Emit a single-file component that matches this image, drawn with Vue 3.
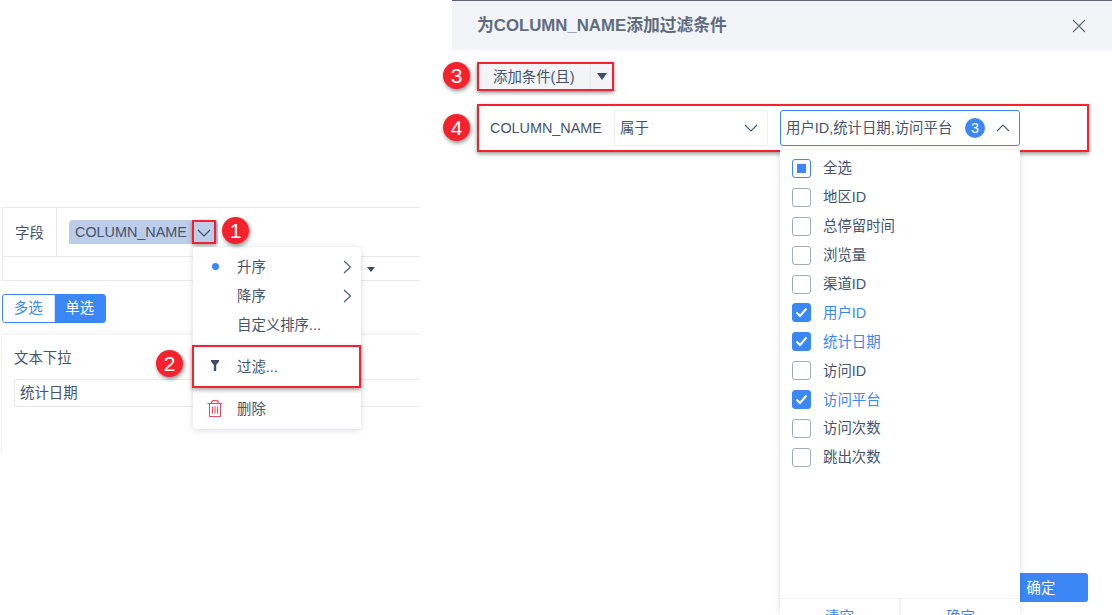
<script setup>
const sortItems = [
  { label: '升序', dot: true, arrow: true },
  { label: '降序', arrow: true },
  { label: '自定义排序...' },
]
const options = [
  { label: '全选', state: 'partial' },
  { label: '地区ID' },
  { label: '总停留时间' },
  { label: '浏览量' },
  { label: '渠道ID' },
  { label: '用户ID', state: 'on' },
  { label: '统计日期', state: 'on' },
  { label: '访问ID' },
  { label: '访问平台', state: 'on' },
  { label: '访问次数' },
  { label: '跳出次数' },
]
</script>

<template>
  <div class="page">
    <section class="left">
      <div class="field-table">
        <div class="field-row">
          <div class="field-label">字段</div>
          <div class="field-value">
            <div class="pill">
              <span>COLUMN_NAME</span>
              <span class="pill-arrow">
                <svg width="14" height="8" viewBox="0 0 14 8"><path d="M1 1l6 6 6-6" fill="none" stroke="#3d4d66" stroke-width="1.1"/></svg>
                <i class="mark-box"></i>
              </span>
              <b class="badge badge-1">1</b>
            </div>
          </div>
        </div>
        <div class="field-sub"><i class="caret"></i></div>
      </div>

      <div class="segment">
        <span class="seg seg-off">多选</span>
        <span class="seg seg-on">单选</span>
      </div>

      <div class="card">
        <div class="card-title">文本下拉</div>
        <div class="card-input">统计日期</div>
      </div>

      <div class="menu">
        <div class="menu-top">
          <div v-for="item in sortItems" :key="item.label" class="menu-item">
            <span class="menu-icon"><i v-if="item.dot" class="dot"></i></span>
            <span class="menu-text">{{ item.label }}</span>
            <svg v-if="item.arrow" class="menu-arrow" width="9" height="14" viewBox="0 0 9 14"><path d="M1 1l6.5 6L1 13" fill="none" stroke="#4a5a73" stroke-width="1.1"/></svg>
          </div>
        </div>
        <div class="menu-item menu-filter">
          <span class="menu-icon">
            <svg width="8" height="11" viewBox="0 0 8 11"><path d="M0 0h8v1.5L5.2 5v6H2.8V5L0 1.5z" fill="#3d4d66"/></svg>
          </span>
          <span class="menu-text">过滤...</span>
          <i class="mark-box"></i>
          <b class="badge badge-2">2</b>
        </div>
        <div class="menu-item menu-delete">
          <span class="menu-icon">
            <svg width="16" height="17" viewBox="0 0 16 17" fill="none" stroke="#ea4f60" stroke-width="1.1"><path d="M0.5 3.5h15M4.5 3.5C4.5 1.5 5.5 .6 6.5 .6h3c1 0 2 .9 2 2.9M2.5 3.5v13h11v-13M5.5 6.5v7M8 6.5v7M10.5 6.5v7"/></svg>
          </span>
          <span class="menu-text">删除</span>
        </div>
      </div>
    </section>

    <section class="dialog">
      <header class="dialog-head">
        <h2>为COLUMN_NAME添加过滤条件</h2>
        <svg width="14" height="14" viewBox="0 0 14 14"><path d="M1 1l12 12M13 1L1 13" stroke="#5f6b7e" stroke-width="1.1" fill="none"/></svg>
      </header>

      <div class="dialog-body">
        <div class="add-btn">
          <span class="add-main">添加条件(且)</span>
          <span class="add-more"><i class="caret caret-lg"></i></span>
          <i class="mark-box"></i>
          <b class="badge badge-3">3</b>
        </div>

        <div class="condition">
          <span class="cond-name">COLUMN_NAME</span>
          <div class="select">
            <span>属于</span>
            <svg width="14" height="8" viewBox="0 0 14 8"><path d="M1 1l6 6 6-6" fill="none" stroke="#4a5a73" stroke-width="1.1"/></svg>
          </div>
          <div class="multi">
            <span class="multi-text">用户ID,统计日期,访问平台</span>
            <span class="count">3</span>
            <svg width="14" height="8" viewBox="0 0 14 8"><path d="M1 7l6-6 6 6" fill="none" stroke="#4a5a73" stroke-width="1.1"/></svg>
            <div class="dropdown">
              <div class="opt-list">
                <div v-for="o in options" :key="o.label" class="opt" :class="{ 'opt-on': o.state === 'on' }">
                  <span class="check" :class="o.state">
                    <svg v-if="o.state === 'on'" width="13" height="11" viewBox="0 0 13 11"><path d="M1.5 5.5l3.5 3.5 6.5-7.5" fill="none" stroke="#fff" stroke-width="2"/></svg>
                    <i v-if="o.state === 'partial'"></i>
                  </span>
                  <span>{{ o.label }}</span>
                </div>
              </div>
              <div class="drop-foot">
                <span>清空</span>
                <span>确定</span>
              </div>
            </div>
          </div>
          <i class="mark-box"></i>
          <b class="badge badge-4">4</b>
        </div>

        <div class="confirm">确定</div>
      </div>
    </section>
  </div>
</template>

<style>
html, body { margin: 0; background: #fff; overflow: hidden; }
</style>

<style scoped>
.page {
  position: relative;
  width: 1112px;
  height: 615px;
  overflow: hidden;
  display: flex;
  background: #fff;
  color: #45546c;
  font: 14.4px/20px "Liberation Sans", "Noto Sans CJK SC", sans-serif;
}
i, b { display: block; font-style: normal; }

.mark-box {
  position: absolute;
  border: 2px solid #f5222d;
  box-shadow: 0 2px 4px rgba(0, 0, 0, .35);
  pointer-events: none;
}
.badge {
  position: absolute;
  width: 27px;
  height: 27px;
  border-radius: 50%;
  background: #f5222d;
  color: #fff;
  font: 400 21px/27px "Liberation Sans", sans-serif;
  text-align: center;
  box-shadow: 1px 2px 4px rgba(0, 0, 0, .45);
  z-index: 5;
}

/* left */
.left {
  position: relative;
  width: 421px;
  flex: none;
  padding: 207px 0 0 2px;
  box-sizing: border-box;
  overflow: hidden;
}
.field-table { border: 1px solid #e8eaee; border-right: 0; }
.field-row { display: flex; height: 48px; border-bottom: 1px solid #e8eaee; }
.field-label {
  width: 54px;
  border-right: 1px solid #e8eaee;
  padding-left: 12px;
  box-sizing: border-box;
  line-height: 50px;
}
.field-value { padding: 12px 0 0 12px; }
.pill {
  position: relative;
  display: flex;
  align-items: center;
  width: 149px;
  height: 24px;
  background: #bccde9;
  border-radius: 4px 4px 0 0;
  padding-left: 6px;
  box-sizing: border-box;
}
.pill-arrow {
  position: relative;
  display: flex;
  align-items: center;
  justify-content: center;
  width: 22px;
  height: 22px;
  margin-left: 6px;
  padding-top: 2px;
  box-sizing: border-box;
}
.pill-arrow .mark-box { inset: -1px -1px -1px -1px; }
.badge-1 { left: 153px; top: -3px; }
.field-sub {
  position: relative;
  height: 23px;
}
.field-sub .caret { position: absolute; left: 364px; top: 10px; }
.caret {
  width: 0;
  height: 0;
  border: 4px solid transparent;
  border-top: 5px solid #3d4d66;
  border-bottom: 0;
}
.caret-lg {
  border-width: 7px 5px 0;
  border-top-color: #3d4d66;
}

.segment {
  display: inline-flex;
  margin-top: 13px;
  border: 1px solid #3a87f5;
  border-radius: 3px;
  height: 27px;
  width: 102px;
}
.seg { flex: 1; text-align: center; line-height: 27px; }
.seg-off { color: #3a87f5; background: #fff; border-radius: 3px 0 0 3px; }
.seg-on { color: #fff; background: #3a87f5; border-left: 1px solid #cfe0fa; }

.card {
  margin-top: 12px;
  height: 110px;
  padding: 13px 0 0 12px;
  border-radius: 3px 0 0 3px;
  box-shadow: 0 -3px 4px -1px rgba(40, 50, 70, .05), -2px -1px 3px -1px rgba(40, 50, 70, .05);
}
.card-title { line-height: 20px; }
.card-input {
  margin-top: 11px;
  height: 26px;
  line-height: 26px;
  padding-left: 5px;
  border: 1px solid #e8eaee;
  border-right: 0;
  border-radius: 3px 0 0 3px;
}

.menu {
  position: absolute;
  left: 193px;
  top: 247px;
  width: 168px;
  height: 182px;
  background: #fff;
  border-radius: 3px;
  box-shadow: 0 1px 6px rgba(40, 50, 70, .18);
  z-index: 3;
  display: flex;
  flex-direction: column;
}
.menu-top { padding-top: 5px; height: 92px; box-sizing: border-box; }
.menu-item {
  position: relative;
  display: flex;
  align-items: center;
  height: 29.4px;
}
.menu-icon { width: 44px; flex: none; display: flex; justify-content: center; }
.dot { width: 7px; height: 7px; border-radius: 50%; background: #3a87f5; }
.menu-text { flex: 1; }
.menu-arrow { margin-right: 9px; }
.menu-filter { height: 41px; margin-top: 7px; }
.menu-filter .mark-box { inset: -1px 0 -1px -1px; }
.menu-filter .menu-icon svg { margin-bottom: 2px; }
.badge-2 { left: -37px; top: 4px; }
.menu-delete { margin-top: 7px; }

/* dialog */
.dialog {
  position: relative;
  margin-left: 31px;
  flex: 1;
  min-width: 0;
}
.dialog-head {
  height: 50px;
  box-sizing: border-box;
  background: #f2f4f8;
  border-top: 1px solid #5c6678;
  display: flex;
  align-items: center;
  justify-content: space-between;
  padding: 0 26px 0 25px;
}
.dialog-head h2 {
  margin: 0;
  font-size: 16.8px;
  font-weight: 700;
  color: #5f6b7e;
}
.dialog-body { position: relative; padding: 13px 0 0 25px; height: 565px; box-sizing: border-box; }

.add-btn {
  position: relative;
  display: flex;
  width: 135px;
  height: 27px;
  background: #f2f4f8;
  box-shadow: 0 2px 4px rgba(40, 50, 70, .12);
}
.add-main {
  width: 114px;
  padding-left: 16px;
  box-sizing: border-box;
  line-height: 28px;
  border-right: 1px solid #e4e7ec;
  white-space: nowrap;
}
.add-more { flex: 1; display: flex; align-items: center; justify-content: center; }
.add-btn .mark-box { inset: -1px -2px -1px 0; }
.badge-3 { left: -34px; top: -1px; }

.condition {
  position: relative;
  display: flex;
  align-items: center;
  margin-top: 15px;
  width: 610px;
  height: 46px;
  box-sizing: border-box;
  padding: 0 0 0 13px;
  box-shadow: 0 2px 4px rgba(40, 50, 70, .1);
}
.condition > .mark-box { inset: -1px -2px -1px 0; }
.badge-4 { left: -34px; top: 9px; }
.cond-name { width: 124px; flex: none; }
.select {
  width: 154px;
  height: 36px;
  flex: none;
  margin-right: 12px;
  box-sizing: border-box;
  border: 1px solid #eceef2;
  border-radius: 3px;
  display: flex;
  align-items: center;
  justify-content: space-between;
  padding: 0 9px 0 5px;
}
.multi {
  position: relative;
  width: 240px;
  height: 36px;
  flex: none;
  box-sizing: border-box;
  border: 1px solid #3a87f5;
  border-radius: 3px;
  display: flex;
  align-items: center;
  padding-left: 5px;
}
.multi-text { width: 179px; flex: none; white-space: nowrap; }
.count {
  width: 20px;
  height: 20px;
  border-radius: 50%;
  background: #3a87f5;
  color: #fff;
  text-align: center;
  line-height: 20px;
  margin-right: 11px;
  flex: none;
}
.dropdown {
  position: absolute;
  left: -1px;
  top: 39px;
  width: 240px;
  height: 465px;
  background: #fff;
  box-shadow: 0 1px 6px rgba(40, 50, 70, .16);
  z-index: 2;
}
.opt-list { padding-top: 4px; height: 448px; box-sizing: border-box; }
.opt {
  display: flex;
  align-items: center;
  height: 28.9px;
  padding-left: 12px;
}
.opt-on { color: #3a87f5; }
.check {
  width: 19px;
  height: 19px;
  box-sizing: border-box;
  border: 1px solid #a3acba;
  border-radius: 3px;
  margin-right: 12px;
  display: flex;
  align-items: center;
  justify-content: center;
  flex: none;
}
.check.on { background: #3a87f5; border-color: #3a87f5; }
.check.partial { border-color: #3a87f5; }
.check.partial i { width: 9px; height: 9px; background: #3a87f5; }
.drop-foot {
  display: flex;
  border-top: 1px solid #f0f2f6;
  height: 22px;
  color: #3a87f5;
}
.drop-foot span {
  flex: 1;
  text-align: center;
  line-height: 36px;
}
.drop-foot span + span { border-left: 2px solid #f0f2f6; }

.confirm {
  position: absolute;
  right: 24px;
  top: 523px;
  width: 94px;
  height: 29px;
  line-height: 30px;
  background: #3a87f5;
  color: #fff;
  border-radius: 3px;
  text-align: center;
}
</style>
